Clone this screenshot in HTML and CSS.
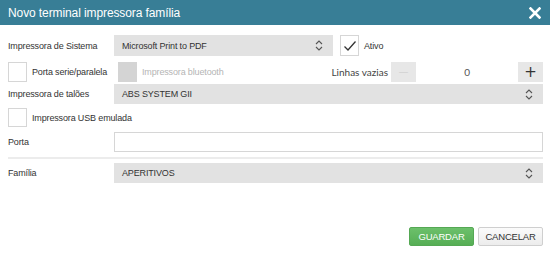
FILE: index.html
```html
<!DOCTYPE html>
<html>
<head>
<meta charset="utf-8">
<link rel="stylesheet" href="styles.css">
</head>
<body>
<div class="dialog">
  <div class="header">
    <span class="title">Novo terminal impressora família</span>
    <svg class="close" width="12" height="12" viewBox="0 0 12 12"><path d="M1.5 1.5L10.5 10.5M10.5 1.5L1.5 10.5" stroke="#fff" stroke-width="2.6" stroke-linecap="square"/></svg>
  </div>
  <div class="body">
    <div class="row r1">
      <label class="lbl">Impressora de Sistema</label>
      <div class="select w-mid">Microsoft Print to PDF<span class="arrows"><svg width="8" height="11" viewBox="0 0 8 11"><path d="M1 4L4 1L7 4M1 7L4 10L7 7" fill="none" stroke="#555" stroke-width="1.1"/></svg></span></div>
      <span class="check checked"><svg width="14" height="12" viewBox="0 0 14 12"><path d="M1.5 6.5L5 10L12.5 1.5" fill="none" stroke="#333" stroke-width="1.3"/></svg></span>
      <span class="ck-text">Ativo</span>
    </div>
    <div class="row r2">
      <span class="check"></span>
      <span class="ck-text t-porta">Porta serie/paralela</span>
      <span class="check disabled"></span>
      <span class="ck-text muted">Impressora bluetooth</span>
      <span class="lines-lbl">Linhas vazias</span>
      <div class="spinner">
        <span class="sp-btn minus">&#8212;</span>
        <span class="sp-val">0</span>
        <span class="sp-btn plus">+</span>
      </div>
    </div>
    <div class="row r3">
      <label class="lbl">Impressora de talões</label>
      <div class="select w-full">ABS SYSTEM GII<span class="arrows"><svg width="8" height="11" viewBox="0 0 8 11"><path d="M1 4L4 1L7 4M1 7L4 10L7 7" fill="none" stroke="#555" stroke-width="1.1"/></svg></span></div>
    </div>
    <div class="row r4">
      <span class="check"></span>
      <span class="ck-text">Impressora USB emulada</span>
    </div>
    <div class="row r5">
      <label class="lbl">Porta</label>
      <div class="input w-full"></div>
    </div>
    <div class="divider"></div>
    <div class="row r6">
      <label class="lbl">Família</label>
      <div class="select w-full">APERITIVOS<span class="arrows"><svg width="8" height="11" viewBox="0 0 8 11"><path d="M1 4L4 1L7 4M1 7L4 10L7 7" fill="none" stroke="#555" stroke-width="1.1"/></svg></span></div>
    </div>
    <div class="actions">
      <button class="btn btn-save">GUARDAR</button>
      <button class="btn btn-cancel">CANCELAR</button>
    </div>
  </div>
</div>
</body>
</html>
```
FILE: styles.css
```css
* { box-sizing: border-box; }
html, body { margin: 0; padding: 0; background: #fff; }
body { font-family: "Liberation Sans", Arial, sans-serif; font-size: 9px; letter-spacing: -0.15px; color: #333; width: 550px; height: 259px; overflow: hidden; }
.dialog { width: 550px; }
.header { height: 25px; background: #387e96; display: flex; align-items: center; justify-content: space-between; padding: 0 9px 0 8px; }
.title { color: #fff; font-size: 12px; letter-spacing: -0.1px; }
.close { display: block; }
.body { padding: 10px 7px 0 8px; }
.row { display: flex; align-items: center; }
.lbl { width: 106px; flex: none; }
.select { height: 21px; background: #e2e2e2; padding: 0 8px; display: flex; align-items: center; justify-content: space-between; color: #333; }
.w-mid { width: 219px; flex: none; }
.w-full { flex: 1; }
.arrows { display: flex; align-items: center; margin-right: 2px; }
.arrows svg { display: block; }
.check { width: 19px; height: 20px; border: 1px solid #d6d6d6; background: #fff; flex: none; display: flex; align-items: center; justify-content: center; }
.check.disabled { background: #d4d4d4; border-color: #d4d4d4; }
.ck-text { margin-left: 5px; white-space: nowrap; }
.muted { color: #b5b5b5; }
.r1 { height: 21px; }
.r1 .check { margin-left: 7px; height: 21px; }
.r2 { margin-top: 5px; height: 21px; }
.t-porta { width: 86px; flex: none; }
.lines-lbl { margin-left: auto; margin-right: 3px; font-family: "Lato", sans-serif; font-size: 10px; letter-spacing: 0; color: #444; }
.spinner { display: flex; width: 152px; height: 20px; flex: none; }
.sp-btn { width: 25px; flex: none; background: #e7e7e7; display: flex; align-items: center; justify-content: center; }
.sp-btn.minus { color: #c9c9c9; font-size: 9px; }
.sp-btn.plus { color: #333; font-size: 15px; font-family: "DejaVu Sans", sans-serif; }
.sp-val { flex: 1; display: flex; align-items: center; justify-content: center; background: #fff; font-family: "Lato", sans-serif; font-size: 10px; color: #555; }
.r3 { margin-top: 2px; height: 20px; }
.r3 .select { height: 20px; }
.r4 { margin-top: 4px; height: 19px; }
.r4 .check { height: 19px; }
.r5 { margin-top: 5px; height: 20px; }
.input { height: 20px; border: 1px solid #d6d6d6; background: #fff; }
.divider { margin-top: 5px; height: 2px; background: #ececec; }
.r6 { margin-top: 4px; height: 20px; }
.r6 .select { height: 20px; }
.actions { display: flex; justify-content: flex-end; gap: 4px; margin-top: 44px; }
.btn { height: 19px; width: 65px; font-family: "Liberation Sans", Arial, sans-serif; font-size: 9.5px; letter-spacing: -0.2px; border-radius: 2px; padding: 0; display: flex; align-items: center; justify-content: center; }
.btn-save { background: linear-gradient(#6cc06b, #56ae55); border: 1px solid #55a854; color: #fff; }
.btn-cancel { background: linear-gradient(#fbfbfb, #ececec); border: 1px solid #cfcfcf; color: #333; }
```
